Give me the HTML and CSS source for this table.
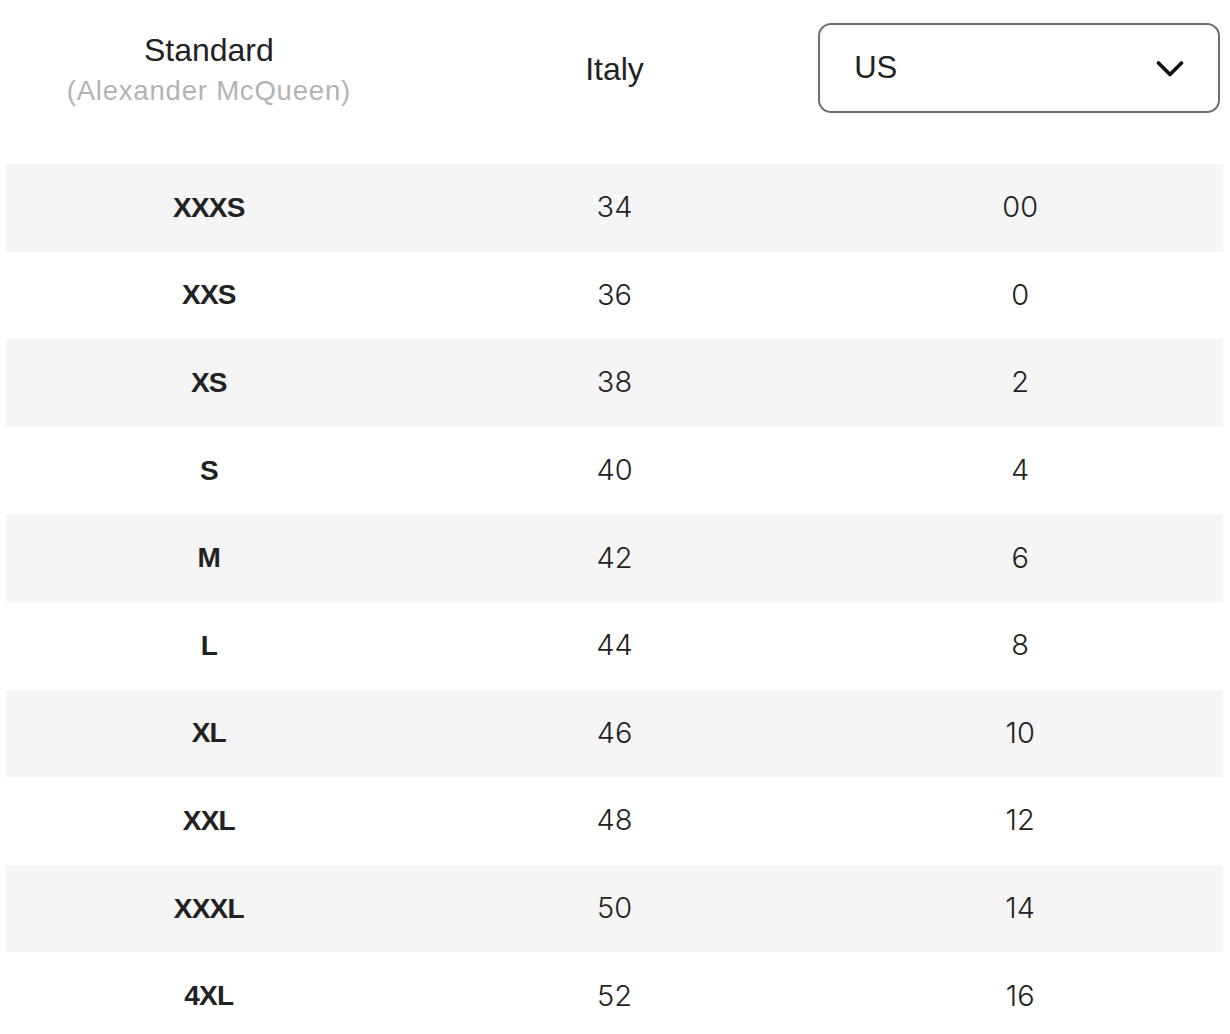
FILE: index.html
```html
<!DOCTYPE html>
<html lang="en">
<head>
<meta charset="utf-8">
<title>Size guide</title>
<link rel="stylesheet" href="styles.css">
</head>
<body>
<div class="page">
  <div class="head">
    <div class="hcol std">
      <div class="std-title">Standard</div>
      <div class="std-sub">(Alexander McQueen)</div>
    </div>
    <div class="hcol italy">Italy</div>
    <div class="hcol">
      <div class="select">
        <span class="select-val">US</span>
        <svg class="chev" width="28" height="18" viewBox="0 0 28 18"><path d="M2.5 3 L14 14.5 L25.5 3" fill="none" stroke="#111" stroke-width="3.6" stroke-linecap="round" stroke-linejoin="round"/></svg>
      </div>
    </div>
  </div>
  <div class="table">
    <div class="row shade"><div class="lbl">XXXS</div><div class="num">34</div><div class="num">00</div></div>
    <div class="row"><div class="lbl">XXS</div><div class="num">36</div><div class="num">0</div></div>
    <div class="row shade"><div class="lbl">XS</div><div class="num">38</div><div class="num">2</div></div>
    <div class="row"><div class="lbl">S</div><div class="num">40</div><div class="num">4</div></div>
    <div class="row shade"><div class="lbl">M</div><div class="num">42</div><div class="num">6</div></div>
    <div class="row"><div class="lbl">L</div><div class="num">44</div><div class="num">8</div></div>
    <div class="row shade"><div class="lbl">XL</div><div class="num">46</div><div class="num">10</div></div>
    <div class="row"><div class="lbl">XXL</div><div class="num">48</div><div class="num">12</div></div>
    <div class="row shade"><div class="lbl">XXXL</div><div class="num">50</div><div class="num">14</div></div>
    <div class="row"><div class="lbl">4XL</div><div class="num">52</div><div class="num">16</div></div>
  </div>
</div>
</body>
</html>
```

FILE: styles.css
```css
html, body {
  margin: 0;
  padding: 0;
  background: #ffffff;
}
body {
  font-family: "Liberation Sans", Arial, sans-serif;
  color: #222222;
  overflow: hidden;
}
.page {
  width: 1217px;
  margin-left: 6px;
}
.head {
  display: grid;
  grid-template-columns: 1fr 1fr 1fr;
  height: 90px;
  padding-top: 23px;
  padding-bottom: 51px;
}
.hcol {
  display: flex;
  flex-direction: column;
  align-items: center;
  justify-content: center;
}
.std {
  padding-top: 6px;
}
.std-title {
  font-size: 32px;
  line-height: 40px;
  color: #222;
}
.std-sub {
  font-size: 27.5px;
  line-height: 42px;
  color: #b3b3b3;
  letter-spacing: 0.8px;
}
.italy {
  font-size: 32px;
  padding-top: 2px;
}
.select {
  box-sizing: border-box;
  width: 402px;
  height: 90px;
  margin-left: -2px;
  border: 2px solid #6e6e6e;
  border-radius: 13px;
  display: flex;
  align-items: center;
  justify-content: space-between;
  padding: 0 34px 0 34px;
}
.select-val {
  font-size: 31px;
  color: #222;
}
.chev {
  display: block;
  margin-top: 2px;
}
.table {
  display: flex;
  flex-direction: column;
}
.row {
  display: grid;
  grid-template-columns: 1fr 1fr 1fr;
  height: 87.6px;
  align-items: center;
  text-align: center;
}
.shade {
  background: #f5f5f5;
}
.lbl {
  font-weight: bold;
  font-size: 28px;
  letter-spacing: -0.8px;
  color: #222;
}
.num {
  font-family: "Inter", sans-serif;
  font-weight: 300;
  font-size: 29px;
  color: #222;
  margin-top: -2px;
}
```
